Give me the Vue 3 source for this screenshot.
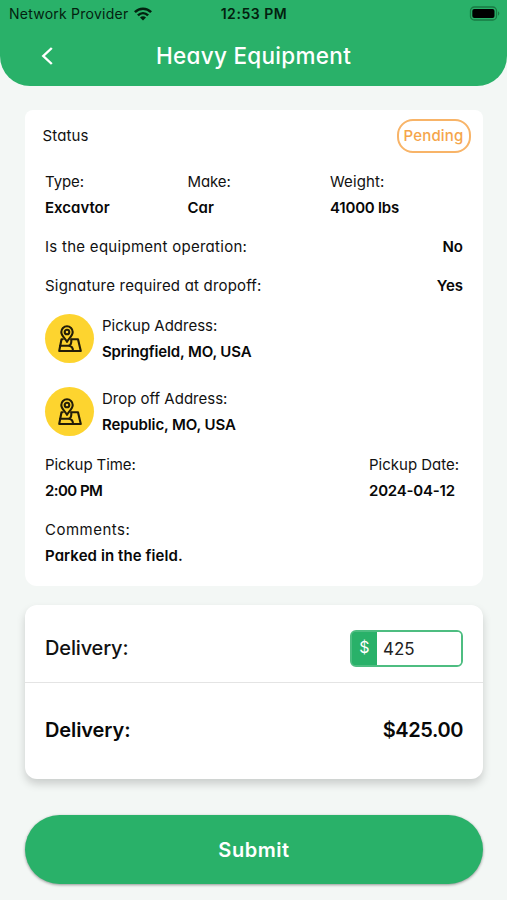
<script setup>
import { ref, computed } from 'vue'

const summary = [
  { label: 'Type:', value: 'Excavtor', id: 'type' },
  { label: 'Make:', value: 'Car', id: 'make' },
  { label: 'Weight:', value: '41000 lbs', id: 'weight' },
]
const addresses = [
  { label: 'Pickup Address:', value: 'Springfield, MO, USA', id: 'pickup' },
  { label: 'Drop off Address:', value: 'Republic, MO, USA', id: 'dropoff' },
]
const amount = ref('425')
const total = computed(() => '$' + Number(amount.value).toFixed(2))
</script>

<template>
  <main class="screen">
    <header class="header">
      <div class="statusbar">
        <div class="carrier">
          <span class="carrier-name">Network Provider</span>
          <svg class="wifi" viewBox="0 0 18 14" width="18" height="14">
            <g fill="none" stroke="#03210f" stroke-width="2.5">
              <path d="M.9 5.200C5.400 .6 12.600 .6 17.100 5.200" />
              <path d="M3.900 8.300C6.900 5.400 11.100 5.400 14.100 8.300" />
            </g>
            <path d="M9 13.400L6 10.400C7.600 8.900 10.400 8.900 12 10.400Z" fill="#03210f" />
          </svg>
        </div>
        <span class="clock">12:53 PM</span>
        <svg class="battery" viewBox="0 0 31 15" width="31" height="15">
          <rect x="1.500" y="1" width="26" height="13" rx="3.800" fill="none" stroke="#197a43" stroke-width="1.300" />
          <rect x="3.300" y="2.900" width="22.200" height="9.200" rx="2" fill="#000" />
          <path d="M29 5.300v4.400c1.800-.7 1.800-3.700 0-4.400z" fill="#197a43" />
        </svg>
      </div>
      <div class="titlebar">
        <svg class="back" viewBox="0 0 12 18" width="12" height="18">
          <path d="M10.800 1L2.300 9l8.500 8" fill="none" stroke="#fff" stroke-width="2.400" />
        </svg>
        <h1 class="title">Heavy Equipment</h1>
      </div>
    </header>

    <section class="card details">
      <div class="state">
        <span class="state-label">Status</span>
        <span class="badge"><span class="badge-text">Pending</span></span>
      </div>

      <div class="summary">
        <div v-for="s in summary" :key="s.id">
          <p><span :class="'l-' + s.id">{{ s.label }}</span></p>
          <p><b :class="'v-' + s.id">{{ s.value }}</b></p>
        </div>
      </div>
      <div class="line"><span class="l-operation">Is the equipment operation:</span><b class="v-no">No</b></div>
      <div class="line"><span class="l-signature">Signature required at dropoff:</span><b class="v-yes">Yes</b></div>

      <div v-for="a in addresses" :key="a.id" class="address">
        <span class="pin">
          <svg viewBox="0 0 26 28" width="26" height="28" fill="none" stroke="#231d08" stroke-width="2.100" stroke-linejoin="round" stroke-linecap="round">
            <path d="M10 16.800C8 13.300 4.300 10.800 4.300 7a5.700 5.700 0 0 1 11.400 0c0 3.800-3.700 6.300-5.700 9.800z" />
            <circle cx="10" cy="7" r="2.300" />
            <path d="M5.700 14.300H4.500L2.200 26H23.800L21 14.300H14.300" />
            <path d="M3.200 20.800H11C13.800 20.800 14.600 18 14.300 14.800M11 20.800C14.500 20.800 16 23 16 25.800" />
          </svg>
        </span>
        <div>
          <p><span :class="'l-' + a.id">{{ a.label }}</span></p>
          <p><b :class="'v-' + a.id">{{ a.value }}</b></p>
        </div>
      </div>

      <div class="schedule">
        <div>
          <p><span class="l-time">Pickup Time:</span></p>
          <p><b class="v-time">2:00 PM</b></p>
        </div>
        <div class="date">
          <p><span class="l-date">Pickup Date:</span></p>
          <p><b class="v-date">2024-04-12</b></p>
        </div>
      </div>
      <div class="comments">
        <p><span class="l-comments">Comments:</span></p>
        <p><b class="v-comments">Parked in the field.</b></p>
      </div>
    </section>

    <section class="card pricing">
      <div class="price-row entry">
        <span class="price-label">Delivery:</span>
        <label class="field">
          <span class="currency">$</span>
          <input v-model="amount" class="amount" inputmode="decimal" />
        </label>
      </div>
      <div class="price-row sum">
        <b class="sum-label">Delivery:</b>
        <b class="sum-value">{{ total }}</b>
      </div>
    </section>

    <button class="submit" type="button"><span class="submit-text">Submit</span></button>
  </main>
</template>

<style>
body {
  margin: 0;
  background: #f3f7f5;
}
</style>

<style scoped>
.screen {
  box-sizing: border-box;
  width: 507px;
  height: 900px;
  overflow: hidden;
  background: #f3f7f5;
  color: #111;
  font-family: Inter, "Open Sans", sans-serif;
  font-feature-settings: "cv11";
  font-size: 15px;
  line-height: 25.500px;
  display: flex;
  flex-direction: column;
}
p { margin: 0; white-space: nowrap; }
b { font-weight: 600; color: #080808; }
.header {
  height: 86px;
  flex: none;
  background: #29b169;
  border-radius: 0 0 30px 30px;
}
.statusbar {
  height: 27px;
  display: grid;
  grid-template-columns: 1fr auto 1fr;
  align-items: center;
  padding: 0 7px 0 9px;
  color: #03210f;
  font-size: 14px;
}
.carrier { display: flex; align-items: center; gap: 6px; }
.carrier-name { font-feature-settings: normal; letter-spacing: .24px; }
.clock { font-feature-settings: normal; font-weight: 600; letter-spacing: .55px; margin-left: -1px; }
.battery { justify-self: end; }
.titlebar {
  height: 57px;
  display: grid;
  grid-template-columns: 60px 1fr 60px;
  align-items: center;
}
.back { margin-left: 41px; }
.title {
  margin: 0;
  text-align: center;
  color: #fff;
  font-size: 22.500px;
  font-weight: 500;
  line-height: 30px;
  letter-spacing: .3px;
}
.card { flex: none; box-sizing: border-box; width: 458px; margin-left: 25px; background: #fff; }
.details {
  margin-top: 24px;
  height: 476px;
  border-radius: 8px 8px 12px 12px;
  padding: 9px 20px 0;
}
.state {
  display: flex;
  justify-content: space-between;
  align-items: center;
  margin: 0 -7.500px 0 -2.500px;
}
.badge {
  box-sizing: border-box;
  width: 74px;
  height: 34px;
  border: 2px solid #f8b468;
  border-radius: 16px;
  color: #f5a54a;
  font-weight: 500;
  display: flex;
  align-items: center;
  justify-content: center;
}
.badge-text, .state-label { letter-spacing: .15px; }
.l-type, .l-make, .l-time { letter-spacing: -.1px; }
.l-weight { letter-spacing: .1px; }
.l-operation { letter-spacing: .28px; }
.l-signature { letter-spacing: .19px; }
.l-comments { letter-spacing: .5px; }
.v-weight, .v-date { letter-spacing: -.2px; }
.v-pickup { letter-spacing: -.15px; }
.v-dropoff { letter-spacing: -.12px; }
.v-time { letter-spacing: -.55px; }
.v-comments { letter-spacing: .08px; }
.summary {
  display: grid;
  grid-template-columns: 142.500px 142.500px 1fr;
  margin-top: 16px;
}
.line { display: flex; justify-content: space-between; margin-top: 13.500px; }
.address { display: flex; align-items: center; gap: 8px; margin-top: 15px; }
.address + .address { margin-top: 22px; }
.pin {
  width: 49px;
  height: 49px;
  border-radius: 50%;
  background: #fdd42f;
  display: flex;
  align-items: center;
  justify-content: center;
}
.schedule { display: flex; justify-content: space-between; margin-top: 15px; }
.date { width: 94px; }
.comments { margin-top: 14px; }
.pricing {
  margin-top: 19px;
  height: 174px;
  border-radius: 12px;
  box-shadow: 0 5px 9px rgba(0, 0, 0, .17);
  font-size: 20px;
}
.price-row {
  display: flex;
  align-items: center;
  justify-content: space-between;
  padding: 0 20px;
  box-sizing: border-box;
}
.entry { height: 78px; border-bottom: 1px solid #e4e4e4; padding-top: 9px; }
.price-label { font-weight: 500; letter-spacing: -.15px; padding-top: 2px; }
.sum { height: 96px; }
.sum-label { letter-spacing: -.1px; }
.sum-value { letter-spacing: -.4px; }
.field {
  box-sizing: border-box;
  width: 113px;
  height: 37px;
  border: 2px solid #4dbd81;
  border-radius: 6px;
  background: linear-gradient(90deg, #29b169 26px, #fff 26px) border-box;
  overflow: hidden;
  display: flex;
}
.currency {
  width: 25px;
  flex: none;
  background: #29b169;
  color: #fff;
  font-size: 16px;
  display: flex;
  align-items: center;
  justify-content: center;
}
.amount {
  min-width: 0;
  flex: 1;
  border: 0;
  outline: 0;
  padding: 2px 0 0 6px;
  background: #fff;
  color: #222;
  font: 400 17px Inter, sans-serif;
}
.submit {
  flex: none;
  width: 458px;
  height: 69px;
  margin: 36px 0 0 25px;
  padding: 0;
  border: 0;
  border-radius: 35px;
  background: #29b169;
  box-shadow: 0 1px 3px rgba(0, 0, 0, .4);
  color: #fff;
  font: 600 20px Inter, sans-serif;
  letter-spacing: .55px;
}
</style>
